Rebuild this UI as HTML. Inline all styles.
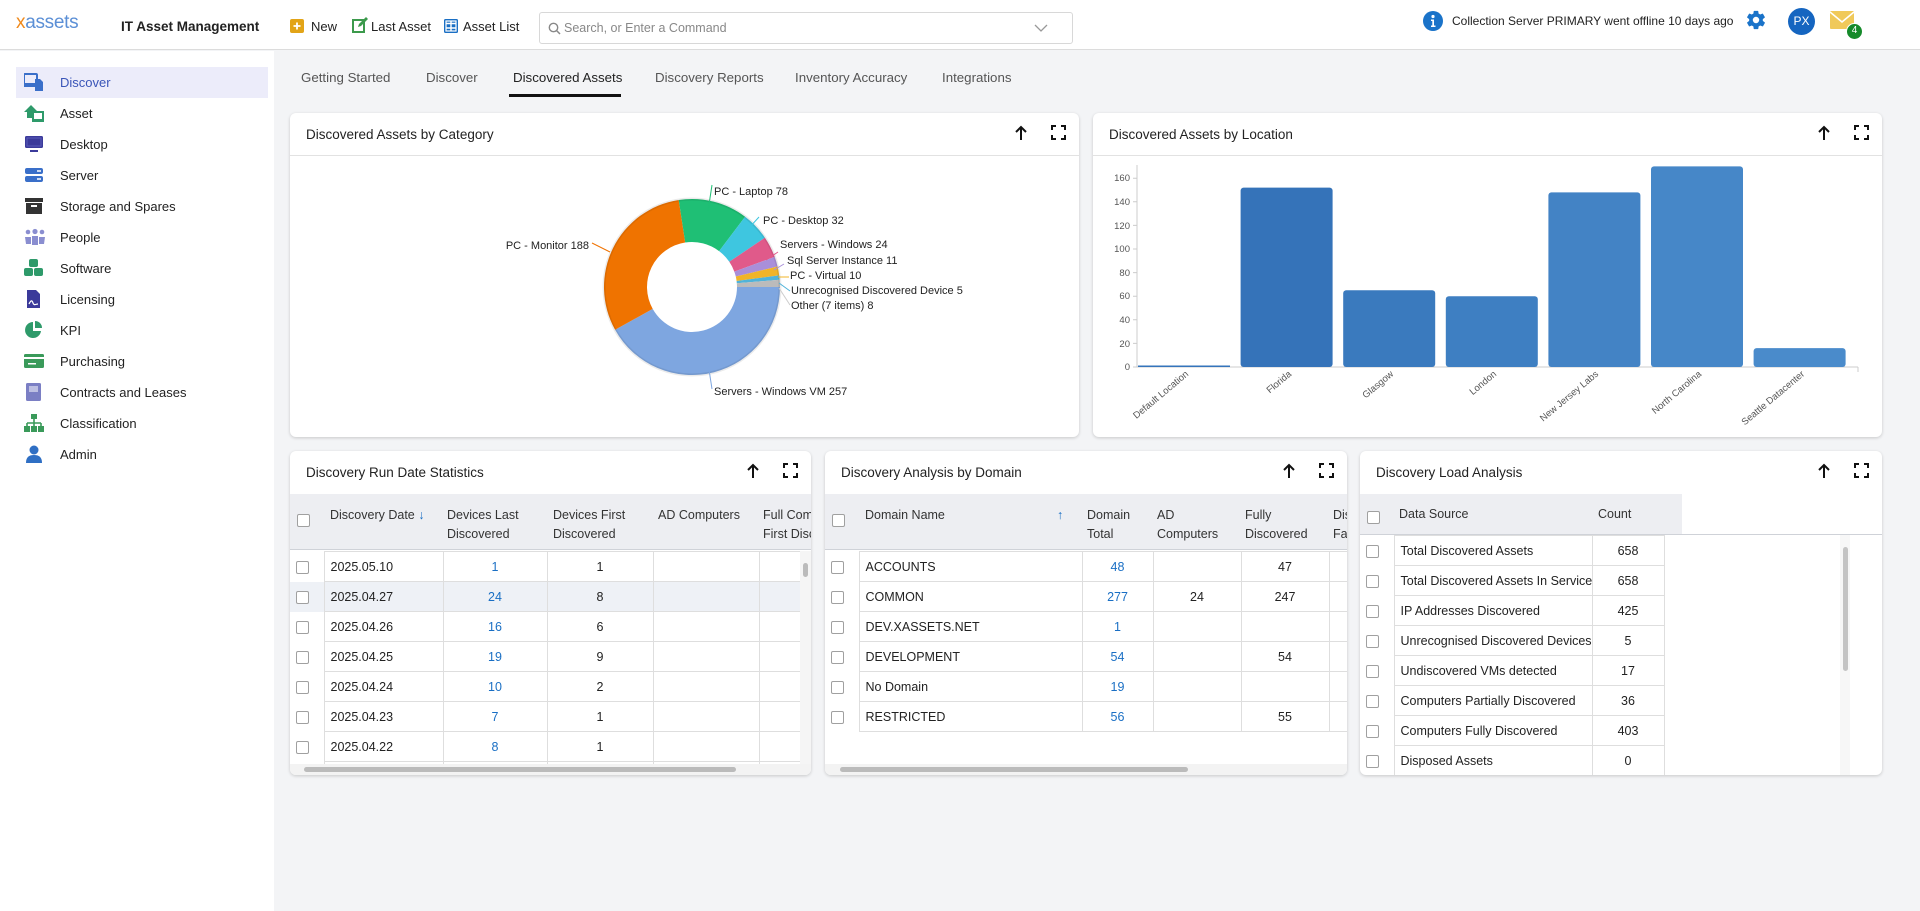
<!DOCTYPE html>
<html><head><meta charset="utf-8">
<style>
*{box-sizing:border-box;margin:0;padding:0}
body{width:1920px;height:911px;overflow:hidden;background:#f3f4f6;font-family:"Liberation Sans",sans-serif;color:#222;position:relative}
.abs{position:absolute}
#hdr{left:0;top:0;width:1920px;height:50px;background:#fff;border-bottom:1px solid #dcdcdc}
#side{left:0;top:51px;width:274px;height:860px;background:#fff}
.nav{position:absolute;left:16px;width:252px;height:31px;font-size:13px;line-height:31px;padding-left:44px;color:#222}
.nav svg{position:absolute;left:8px;top:6px}
.tab{position:absolute;top:70px;font-size:13.3px;color:#555}
.card{position:absolute;background:#fff;border-radius:6px;box-shadow:0 1px 3px rgba(0,0,0,.18)}
.ct{position:absolute;left:16px;top:14px;font-size:13.5px;color:#222}
.chd{position:absolute;left:0;right:0;top:42px;border-top:1px solid #e2e2e2}
.ic{position:absolute;top:11px}
table{border-collapse:collapse;table-layout:fixed;font-size:12.5px}
td{height:30px;border:1px solid #dedede;white-space:nowrap;overflow:hidden;padding:0 6px}
td.c{text-align:center}
td.b{color:#1a6fc4}
td.cb{border-left:none;border-right:1px solid #dedede;border-top:none;border-bottom:none;padding:0 0 0 6px}
.ck{display:inline-block;width:13px;height:13px;border:1px solid #a0a0a0;border-radius:2px;background:#fff;vertical-align:middle}
.gh{position:absolute;left:0;top:43px;height:56px;background:#edeef2;border-bottom:1px solid #cfd2d8;font-size:12.5px;color:#333;overflow:hidden}
.gh span{position:absolute;top:12px;line-height:19px;white-space:nowrap}
</style></head><body>

<div id="hdr" class="abs">
  <div class="abs" style="left:16px;top:12px;font-size:19px;color:#5b8fd6;letter-spacing:-0.3px"><span style="color:#f08a1c">x</span>assets</div>
  <div class="abs" style="left:121px;top:19px;font-size:13.5px;font-weight:bold;color:#222">IT Asset Management</div>
  <svg class="abs" style="left:290px;top:19px" width="14" height="14"><rect width="14" height="14" rx="2" fill="#e2a417"/><path d="M7 3.5v7M3.5 7h7" stroke="#fff" stroke-width="1.8"/></svg>
  <div class="abs" style="left:311px;top:19px;font-size:13px">New</div>
  <svg class="abs" style="left:352px;top:17px" width="16" height="16"><rect x="1" y="3" width="11" height="12" fill="none" stroke="#3c9a4c" stroke-width="2"/><path d="M6 10l1-3 7-7 2 2-7 7z" fill="#3c9a4c"/></svg>
  <div class="abs" style="left:371px;top:19px;font-size:13px">Last Asset</div>
  <svg class="abs" style="left:444px;top:19px" width="14" height="14"><rect width="14" height="14" rx="1.5" fill="#1a6fc4"/><path d="M2 4.5h10M2 9h10M7 2v10" stroke="#fff" stroke-width="1.4"/><rect x="2" y="2" width="10" height="10" fill="none" stroke="#fff" stroke-width="1.2"/></svg>
  <div class="abs" style="left:463px;top:19px;font-size:13px">Asset List</div>
  <div class="abs" style="left:539px;top:12px;width:534px;height:32px;border:1px solid #d8d8d8;border-radius:3px;background:#fff">
    <svg class="abs" style="left:8px;top:9px" width="13" height="13"><circle cx="5.5" cy="5.5" r="4.2" fill="none" stroke="#888" stroke-width="1.4"/><path d="M8.5 8.5l3.5 3.5" stroke="#888" stroke-width="1.5"/></svg>
    <div class="abs" style="left:24px;top:8px;font-size:12.5px;color:#888">Search, or Enter a Command</div>
    <svg class="abs" style="left:494px;top:11px" width="14" height="9"><path d="M1 1l6 6 6-6" fill="none" stroke="#999" stroke-width="1.3"/></svg>
  </div>
  <svg class="abs" style="left:1423px;top:11px" width="20" height="20"><circle cx="10" cy="10" r="10" fill="#1a73c9"/><circle cx="10" cy="5.5" r="1.6" fill="#fff"/><path d="M8 8.5h3v6h1.5v1.5h-4.5v-1.5h1.3v-4.5h-1.3z" fill="#fff"/></svg>
  <div class="abs" style="left:1452px;top:14px;font-size:12px;color:#222">Collection Server PRIMARY went offline 10 days ago</div>
  <svg class="abs" style="left:1745px;top:9px" width="22" height="22" viewBox="0 0 24 24"><path fill="#1a73c9" d="M19.4 13c.04-.33.06-.66.06-1s-.02-.67-.06-1l2.1-1.65c.19-.15.24-.42.12-.64l-2-3.460c-.12-.22-.39-.3-.61-.22l-2.49 1c-.52-.4-1.08-.73-1.690-.98l-.38-2.65A.49.49 0 0 0 14 2h-4c-.25 0-.46.18-.49.42l-.38 2.65c-.61.25-1.170.59-1.69.98l-2.49-1c-.23-.09-.49 0-.61.22l-2 3.46c-.13.22-.07.49.12.64L4.57 11c-.04.33-.07.67-.07 1s.03.67.07 1l-2.11 1.65c-.19.15-.24.42-.12.64l2 3.46c.12.22.39.3.61.22l2.49-1c.52.4 1.08.73 1.69.98l.38 2.65c.03.24.24.42.49.42h4c.25 0 .46-.18.49-.42l.38-2.65c.61-.25 1.17-.59 1.69-.98l2.49 1c.23.09.49 0 .61-.22l2-3.46c.12-.22.07-.49-.12-.64zM12 15.5A3.5 3.5 0 1 1 12 8.5a3.5 3.5 0 0 1 0 7z"/></svg>
  <div class="abs" style="left:1788px;top:8px;width:27px;height:27px;border-radius:50%;background:#1565c0;color:#fff;font-size:12px;text-align:center;line-height:27px">PX</div>
  <svg class="abs" style="left:1830px;top:11px" width="26" height="20"><rect x="0" y="0" width="24" height="18" rx="1" fill="#f0c95a"/><path d="M0 1l12 10 12-10" fill="none" stroke="#fff" stroke-width="1.6"/></svg>
  <div class="abs" style="left:1846px;top:23px;width:17px;height:17px;border-radius:50%;background:#158a2a;border:1.5px solid #fff;color:#fff;font-size:10px;text-align:center;line-height:14px">4</div>
</div>

<div id="side" class="abs">
 <div class="nav" style="top:16px;background:#ececfa;color:#3a55b8"><svg width="20" height="18"><rect x="0" y="1" width="13" height="10" rx="1" fill="none" stroke="#3a6fc9" stroke-width="2"/><rect x="0" y="12" width="14" height="2" fill="#3a6fc9"/><path d="M11 6h5l3 3v9h-8z" fill="#3a6fc9"/></svg>Discover</div>
 <div class="nav" style="top:47px"><svg width="20" height="18"><path d="M0 8l7-7 7 7h-3v6H3V8z" fill="#2e9a6a"/><rect x="9" y="8" width="10" height="8" fill="#fff" stroke="#2e9a6a" stroke-width="2"/><rect x="8" y="16" width="12" height="2" fill="#2e9a6a"/></svg>Asset</div>
 <div class="nav" style="top:78px"><svg width="20" height="18"><rect x="1" y="1" width="18" height="12" rx="1.5" fill="#3b3a9a"/><rect x="3" y="3" width="14" height="8" fill="#3b3a9a" stroke="#5a59b8"/><rect x="6" y="15" width="8" height="2" fill="#3b3a9a"/></svg>Desktop</div>
 <div class="nav" style="top:109px"><svg width="20" height="18"><rect x="1" y="2" width="18" height="6" rx="2" fill="#3a6fc9"/><rect x="1" y="10" width="18" height="6" rx="2" fill="#3a6fc9"/><circle cx="14" cy="5" r="1" fill="#fff"/><circle cx="16" cy="5" r="1" fill="#fff"/><circle cx="14" cy="13" r="1" fill="#fff"/><circle cx="16" cy="13" r="1" fill="#fff"/></svg>Server</div>
 <div class="nav" style="top:140px"><svg width="20" height="18"><rect x="1" y="1" width="18" height="4" fill="#333"/><rect x="2" y="6" width="16" height="11" fill="#333"/><rect x="7" y="8" width="6" height="2" fill="#fff"/></svg>Storage and Spares</div>
 <div class="nav" style="top:171px"><svg width="22" height="18"><circle cx="4" cy="4" r="2.3" fill="#8a8ed0"/><circle cx="11" cy="3.5" r="2.6" fill="#8a8ed0"/><circle cx="18" cy="4" r="2.3" fill="#8a8ed0"/><path d="M1 9h6v7H2zM8 8h6v9H8zM15 9h6l-1 7h-5z" fill="#8a8ed0"/></svg>People</div>
 <div class="nav" style="top:202px"><svg width="20" height="18"><rect x="5" y="0" width="9" height="8" rx="2" fill="#2e9a6a"/><rect x="0" y="9" width="9" height="8" rx="2" fill="#2e9a6a"/><rect x="10" y="9" width="9" height="8" rx="2" fill="#2e9a6a"/></svg>Software</div>
 <div class="nav" style="top:233px"><svg width="20" height="18"><path d="M3 0h9l4 4v14H3z" fill="#3b3a9a"/><path d="M5 14c2-4 3-4 4-1s3 1 5 1" fill="none" stroke="#fff" stroke-width="1.2"/></svg>Licensing</div>
 <div class="nav" style="top:264px"><svg width="20" height="18"><path d="M9 1a8 8 0 1 0 8 9H9z" fill="#2e9a6a"/><path d="M11 0a7 7 0 0 1 7 7h-7z" fill="#2e9a6a"/></svg>KPI</div>
 <div class="nav" style="top:295px"><svg width="20" height="18"><rect x="0" y="2" width="20" height="14" rx="1.5" fill="#3a9a5a"/><rect x="0" y="5" width="20" height="2" fill="#fff"/><rect x="4" y="11" width="8" height="1.5" fill="#fff"/></svg>Purchasing</div>
 <div class="nav" style="top:326px"><svg width="20" height="18"><rect x="2" y="0" width="15" height="18" rx="1.5" fill="#7b7fc4"/><rect x="5" y="3" width="9" height="6" fill="#fff" opacity=".5"/></svg>Contracts and Leases</div>
 <div class="nav" style="top:357px"><svg width="20" height="18"><rect x="7" y="0" width="6" height="5" fill="#3a9a5a"/><path d="M10 5v4M3 9h14M3 9v3M10 9v3M17 9v3" stroke="#3a9a5a" stroke-width="1.6" fill="none"/><rect x="0" y="12" width="6" height="6" fill="#3a9a5a"/><rect x="7" y="12" width="6" height="6" fill="#3a9a5a"/><rect x="14" y="12" width="6" height="6" fill="#3a9a5a"/></svg>Classification</div>
 <div class="nav" style="top:388px"><svg width="20" height="18"><circle cx="10" cy="5" r="4.5" fill="#2f6fc4"/><path d="M2 18c0-6 3-8 8-8s8 2 8 8z" fill="#2f6fc4"/></svg>Admin</div>
</div>

<div class="tab" style="left:301px">Getting Started</div>
<div class="tab" style="left:426px">Discover</div>
<div class="tab" style="left:513px;color:#222">Discovered Assets</div>
<div class="abs" style="left:509px;top:94px;width:112px;height:3px;background:#111"></div>
<div class="tab" style="left:655px">Discovery Reports</div>
<div class="tab" style="left:795px">Inventory Accuracy</div>
<div class="tab" style="left:942px">Integrations</div>

<!-- Card 1 -->
<div class="card" style="left:290px;top:113px;width:789px;height:324px">
 <div class="ct">Discovered Assets by Category</div>
 <svg class="ic" style="left:724px" width="14" height="18"><path d="M7 16V3M2 8l5-5 5 5" fill="none" stroke="#111" stroke-width="2"/></svg>
 <svg class="ic" style="left:761px;top:12px" width="15" height="15"><path d="M1 5V1h4M10 1h4v4M14 10v4h-4M5 14H1v-4" fill="none" stroke="#111" stroke-width="2"/></svg>
 <div class="chd"></div>
 <svg class="abs" style="left:0;top:0" width="789" height="324" font-family="Liberation Sans, sans-serif" font-size="11" fill="#222">
  <g transform="translate(402,174)">
   <path d="M88 0A88 88 0 0 1 -76.9 42.8L-39.3 21.9A45 45 0 0 0 45 0Z" fill="#7ea6e0"/>
   <path d="M-76.9 42.8A88 88 0 0 1 -13.3 -87L-6.8 -44.5A45 45 0 0 0 -39.3 21.9Z" fill="#ef7300"/>
   <path d="M-13.3 -87A88 88 0 0 1 53.1 -70.2L27.1 -35.9A45 45 0 0 0 -6.8 -44.5Z" fill="#1fbf75"/>
   <path d="M53.1 -70.2A88 88 0 0 1 72.9 -49.3L37.3 -25.2A45 45 0 0 0 27.1 -35.9Z" fill="#3ec6e0"/>
   <path d="M72.9 -49.3A88 88 0 0 1 82.7 -30.1L42.3 -15.4A45 45 0 0 0 37.3 -25.2Z" fill="#e05a8a"/>
   <path d="M82.7 -30.1A88 88 0 0 1 85.6 -20.5L43.8 -10.5A45 45 0 0 0 42.3 -15.4Z" fill="#a98fd9"/>
   <path d="M85.6 -20.5A88 88 0 0 1 87.2 -11.6L44.6 -6A45 45 0 0 0 43.8 -10.5Z" fill="#f0b429"/>
   <path d="M87.2 -11.6A88 88 0 0 1 87.7 -7.2L44.8 -3.7A45 45 0 0 0 44.6 -6Z" fill="#4fb3d9"/>
   <path d="M87.7 -7.2A88 88 0 0 1 88 0L45 0A45 45 0 0 0 44.8 -3.7Z" fill="#bbbbbb"/>
   <circle r="88" fill="none" stroke="rgba(0,0,0,.08)" stroke-width="3"/>
  </g>
  <g fill="none" stroke-width="1">
   <path d="M418 98L422 72" stroke="#1fbf75"/>
   <path d="M448 127L469 104" stroke="#3ec6e0"/>
   <path d="M320 139L302 130" stroke="#ef7300"/>
   <path d="M476 147L488 139" stroke="#e05a8a"/>
   <path d="M484 157L494 151" stroke="#a98fd9"/>
   <path d="M488 164L499 164" stroke="#f0b429"/>
   <path d="M489 170L500 178" stroke="#4fb3d9"/>
   <path d="M489 175L500 192" stroke="#ccc"/>
   <path d="M418 250L422 276" stroke="#7ea6e0"/>
  </g>
  <text x="424" y="82">PC - Laptop 78</text>
  <text x="473" y="111">PC - Desktop 32</text>
  <text x="299" y="136" text-anchor="end">PC - Monitor 188</text>
  <text x="490" y="135">Servers - Windows 24</text>
  <text x="497" y="151">Sql Server Instance 11</text>
  <text x="500" y="166">PC - Virtual 10</text>
  <text x="501" y="181">Unrecognised Discovered Device 5</text>
  <text x="501" y="196">Other (7 items) 8</text>
  <text x="424" y="282">Servers - Windows VM 257</text>
 </svg>
</div>

<!-- Card 2 -->
<div class="card" style="left:1093px;top:113px;width:789px;height:324px">
 <div class="ct">Discovered Assets by Location</div>
 <svg class="ic" style="left:724px" width="14" height="18"><path d="M7 16V3M2 8l5-5 5 5" fill="none" stroke="#111" stroke-width="2"/></svg>
 <svg class="ic" style="left:761px;top:12px" width="15" height="15"><path d="M1 5V1h4M10 1h4v4M14 10v4h-4M5 14H1v-4" fill="none" stroke="#111" stroke-width="2"/></svg>
 <div class="chd"></div>
 <svg class="abs" style="left:0;top:0" width="789" height="324" font-family="Liberation Sans, sans-serif" font-size="9.5" fill="#555">
  <path d="M44 52V254H765M765 254v5" stroke="#ccc" fill="none"/>
  <g stroke="#ccc"><path d="M40 254h4M40 230.4h4M40 206.8h4M40 183.2h4M40 159.6h4M40 136h4M40 112.4h4M40 88.8h4M40 65.2h4"/></g>
  <g text-anchor="end"><text x="37" y="257">0</text><text x="37" y="234">20</text><text x="37" y="210">40</text><text x="37" y="186">60</text><text x="37" y="163">80</text><text x="37" y="139">100</text><text x="37" y="116">120</text><text x="37" y="92">140</text><text x="37" y="68">160</text></g>
  <g fill="#3574bb">
   <rect x="45" y="252.5" width="92" height="1.5"/>
   <rect x="147.6" y="74.6" width="92" height="179.4" rx="3" fill="#3573b9"/>
   <rect x="250.2" y="177.3" width="92" height="76.7" rx="3" fill="#3a7abe"/>
   <rect x="352.8" y="183.2" width="92" height="70.8" rx="3" fill="#3e7fc2"/>
   <rect x="455.4" y="79.4" width="92" height="174.6" rx="3" fill="#4383c5"/>
   <rect x="558" y="53.4" width="92" height="200.6" rx="3" fill="#4687c8"/>
   <rect x="660.6" y="235.1" width="92" height="18.9" rx="3" fill="#4a8bcb"/>
  </g>
  <g text-anchor="end" fill="#555">
   <text transform="translate(96,262) rotate(-40)">Default Location</text>
   <text transform="translate(199,262) rotate(-40)">Florida</text>
   <text transform="translate(301,262) rotate(-40)">Glasgow</text>
   <text transform="translate(404,262) rotate(-40)">London</text>
   <text transform="translate(506,262) rotate(-40)">New Jersey Labs</text>
   <text transform="translate(609,262) rotate(-40)">North Carolina</text>
   <text transform="translate(712,262) rotate(-40)">Seattle Datacenter</text>
  </g>
 </svg>
</div>

<!-- Card 3 -->
<div class="card" style="left:290px;top:451px;width:521px;height:324px;overflow:hidden">
 <div class="ct">Discovery Run Date Statistics</div>
 <svg class="ic" style="left:456px" width="14" height="18"><path d="M7 16V3M2 8l5-5 5 5" fill="none" stroke="#111" stroke-width="2"/></svg>
 <svg class="ic" style="left:493px;top:12px" width="15" height="15"><path d="M1 5V1h4M10 1h4v4M14 10v4h-4M5 14H1v-4" fill="none" stroke="#111" stroke-width="2"/></svg>
 <div class="gh" style="width:521px">
  <span style="left:7px;top:17px"><i class="ck"></i></span>
  <span style="left:40px">Discovery Date <b style="color:#1a6fc4;font-weight:normal">&#8595;</b></span>
  <span style="left:157px">Devices Last<br>Discovered</span>
  <span style="left:263px">Devices First<br>Discovered</span>
  <span style="left:368px">AD Computers</span>
  <span style="left:473px">Full Comp<br>First Disco</span>
 </div>
 <div class="abs" style="left:0;top:100px;width:510px;height:213px;overflow:hidden">
 <table style="width:576px">
  <colgroup><col style="width:34px"><col style="width:119px"><col style="width:104px"><col style="width:106px"><col style="width:106px"><col style="width:107px"></colgroup>
  <tr><td class="cb"><i class="ck"></i></td><td>2025.05.10</td><td class="c b">1</td><td class="c">1</td><td></td><td></td></tr>
  <tr style="background:#eef1f6"><td class="cb"><i class="ck"></i></td><td>2025.04.27</td><td class="c b">24</td><td class="c">8</td><td></td><td></td></tr>
  <tr><td class="cb"><i class="ck"></i></td><td>2025.04.26</td><td class="c b">16</td><td class="c">6</td><td></td><td></td></tr>
  <tr><td class="cb"><i class="ck"></i></td><td>2025.04.25</td><td class="c b">19</td><td class="c">9</td><td></td><td></td></tr>
  <tr><td class="cb"><i class="ck"></i></td><td>2025.04.24</td><td class="c b">10</td><td class="c">2</td><td></td><td></td></tr>
  <tr><td class="cb"><i class="ck"></i></td><td>2025.04.23</td><td class="c b">7</td><td class="c">1</td><td></td><td></td></tr>
  <tr><td class="cb"><i class="ck"></i></td><td>2025.04.22</td><td class="c b">8</td><td class="c">1</td><td></td><td></td></tr>
  <tr><td class="cb"><i class="ck"></i></td><td>2025.04.21</td><td class="c b">5</td><td class="c">1</td><td></td><td></td></tr>
 </table></div>
 <div class="abs" style="left:510px;top:100px;width:11px;height:213px;background:#f5f5f5"><div class="abs" style="left:3px;top:12px;width:5px;height:14px;background:#bbb;border-radius:3px"></div></div>
 <div class="abs" style="left:0;top:313px;width:521px;height:11px;background:#f3f3f3"><div class="abs" style="left:14px;top:3px;width:432px;height:5px;background:#bbb;border-radius:3px"></div></div>
</div>

<!-- Card 4 -->
<div class="card" style="left:825px;top:451px;width:522px;height:324px;overflow:hidden">
 <div class="ct">Discovery Analysis by Domain</div>
 <svg class="ic" style="left:457px" width="14" height="18"><path d="M7 16V3M2 8l5-5 5 5" fill="none" stroke="#111" stroke-width="2"/></svg>
 <svg class="ic" style="left:494px;top:12px" width="15" height="15"><path d="M1 5V1h4M10 1h4v4M14 10v4h-4M5 14H1v-4" fill="none" stroke="#111" stroke-width="2"/></svg>
 <div class="gh" style="width:522px">
  <span style="left:7px;top:17px"><i class="ck"></i></span>
  <span style="left:40px">Domain Name</span>
  <span style="left:232px;color:#1a6fc4">&#8593;</span>
  <span style="left:262px">Domain<br>Total</span>
  <span style="left:332px">AD<br>Computers</span>
  <span style="left:420px">Fully<br>Discovered</span>
  <span style="left:508px">Dis<br>Fail</span>
 </div>
 <div class="abs" style="left:0;top:100px;width:522px;height:213px;overflow:hidden">
 <table style="width:600px">
  <colgroup><col style="width:34px"><col style="width:223px"><col style="width:71px"><col style="width:88px"><col style="width:88px"><col style="width:96px"></colgroup>
  <tr><td class="cb"><i class="ck"></i></td><td>ACCOUNTS</td><td class="c b">48</td><td></td><td class="c">47</td><td></td></tr>
  <tr><td class="cb"><i class="ck"></i></td><td>COMMON</td><td class="c b">277</td><td class="c">24</td><td class="c">247</td><td></td></tr>
  <tr><td class="cb"><i class="ck"></i></td><td>DEV.XASSETS.NET</td><td class="c b">1</td><td></td><td></td><td></td></tr>
  <tr><td class="cb"><i class="ck"></i></td><td>DEVELOPMENT</td><td class="c b">54</td><td></td><td class="c">54</td><td></td></tr>
  <tr><td class="cb"><i class="ck"></i></td><td>No Domain</td><td class="c b">19</td><td></td><td></td><td></td></tr>
  <tr><td class="cb"><i class="ck"></i></td><td>RESTRICTED</td><td class="c b">56</td><td></td><td class="c">55</td><td></td></tr>
 </table></div>
 <div class="abs" style="left:0;top:313px;width:522px;height:11px;background:#f3f3f3"><div class="abs" style="left:15px;top:3px;width:348px;height:5px;background:#bbb;border-radius:3px"></div></div>
</div>

<!-- Card 5 -->
<div class="card" style="left:1360px;top:451px;width:522px;height:324px;overflow:hidden">
 <div class="ct">Discovery Load Analysis</div>
 <svg class="ic" style="left:457px" width="14" height="18"><path d="M7 16V3M2 8l5-5 5 5" fill="none" stroke="#111" stroke-width="2"/></svg>
 <svg class="ic" style="left:494px;top:12px" width="15" height="15"><path d="M1 5V1h4M10 1h4v4M14 10v4h-4M5 14H1v-4" fill="none" stroke="#111" stroke-width="2"/></svg>
 <div class="gh" style="width:322px;height:40px;border-bottom:none"><span style="left:7px;top:14px"><i class="ck"></i></span><span style="left:39px;top:11px">Data Source</span><span style="left:238px;top:11px">Count</span></div>
 <div class="abs" style="left:0;top:83px;width:522px;border-top:1px solid #cfd2d8"></div>
 <div class="abs" style="left:0;top:84px;width:512px;height:240px;overflow:hidden">
 <table style="width:304px">
  <colgroup><col style="width:34px"><col style="width:198px"><col style="width:72px"></colgroup>
  <tr><td class="cb"><i class="ck"></i></td><td>Total Discovered Assets</td><td class="c">658</td></tr>
  <tr><td class="cb"><i class="ck"></i></td><td>Total Discovered Assets In Service</td><td class="c">658</td></tr>
  <tr><td class="cb"><i class="ck"></i></td><td>IP Addresses Discovered</td><td class="c">425</td></tr>
  <tr><td class="cb"><i class="ck"></i></td><td>Unrecognised Discovered Devices</td><td class="c">5</td></tr>
  <tr><td class="cb"><i class="ck"></i></td><td>Undiscovered VMs detected</td><td class="c">17</td></tr>
  <tr><td class="cb"><i class="ck"></i></td><td>Computers Partially Discovered</td><td class="c">36</td></tr>
  <tr><td class="cb"><i class="ck"></i></td><td>Computers Fully Discovered</td><td class="c">403</td></tr>
  <tr><td class="cb"><i class="ck"></i></td><td>Disposed Assets</td><td class="c">0</td></tr>
 </table></div>
 <div class="abs" style="left:480px;top:84px;width:10px;height:240px;background:#f7f7f7"><div class="abs" style="left:3px;top:12px;width:5px;height:124px;background:#c4c4c4;border-radius:3px"></div></div>
</div>

</body></html>
